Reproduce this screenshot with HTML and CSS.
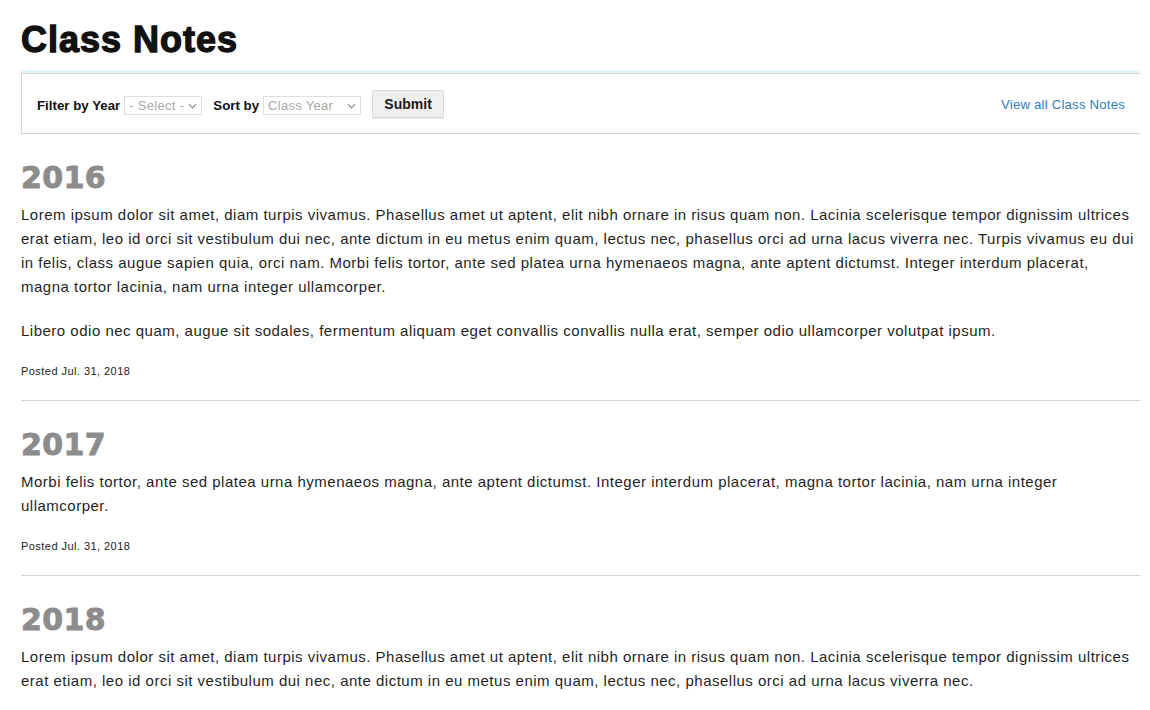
FILE: index.html
```html
<!DOCTYPE html>
<html lang="en">
<head>
<meta charset="utf-8">
<title>Class Notes</title>
<link rel="stylesheet" href="styles.css">
</head>
<body>
<main class="page">
  <h1 class="page-title">Class Notes</h1>

  <form class="filter-bar">
    <div class="filter-controls">
      <label class="filter-label" for="year">Filter by Year</label>
      <span class="select-wrap select-year">
        <select id="year" class="fake-select"><option>- Select -</option></select>
        <svg class="chevron" viewBox="0 0 10 6" width="9" height="6"><path d="M1 1 L5 5 L9 1" fill="none" stroke="#999" stroke-width="1.4"/></svg>
      </span>
      <label class="filter-label sort-label" for="sort">Sort by</label>
      <span class="select-wrap select-sort">
        <select id="sort" class="fake-select"><option>Class Year</option></select>
        <svg class="chevron" viewBox="0 0 10 6" width="9" height="6"><path d="M1 1 L5 5 L9 1" fill="none" stroke="#999" stroke-width="1.4"/></svg>
      </span>
      <button type="button" class="submit-btn">Submit</button>
    </div>
    <a class="view-all" href="#">View all Class Notes</a>
  </form>

  <article class="entry">
    <h2 class="entry-year">2016</h2>
    <p class="entry-text">Lorem ipsum dolor sit amet, diam turpis vivamus. Phasellus amet ut aptent, elit nibh ornare in risus quam non. Lacinia scelerisque tempor dignissim ultrices erat etiam, leo id orci sit vestibulum dui nec, ante dictum in eu metus enim quam, lectus nec, phasellus orci ad urna lacus viverra nec. Turpis vivamus eu dui in felis, class augue sapien quia, orci nam. Morbi felis tortor, ante sed platea urna hymenaeos magna, ante aptent dictumst. Integer interdum placerat, magna tortor lacinia, nam urna integer ullamcorper.</p>
    <p class="entry-text">Libero odio nec quam, augue sit sodales, fermentum aliquam eget convallis convallis nulla erat, semper odio ullamcorper volutpat ipsum.</p>
    <p class="entry-date">Posted Jul. 31, 2018</p>
  </article>

  <article class="entry">
    <h2 class="entry-year">2017</h2>
    <p class="entry-text">Morbi felis tortor, ante sed platea urna hymenaeos magna, ante aptent dictumst. Integer interdum placerat, magna tortor lacinia, nam urna integer ullamcorper.</p>
    <p class="entry-date">Posted Jul. 31, 2018</p>
  </article>

  <article class="entry entry-last">
    <h2 class="entry-year">2018</h2>
    <p class="entry-text">Lorem ipsum dolor sit amet, diam turpis vivamus. Phasellus amet ut aptent, elit nibh ornare in risus quam non. Lacinia scelerisque tempor dignissim ultrices erat etiam, leo id orci sit vestibulum dui nec, ante dictum in eu metus enim quam, lectus nec, phasellus orci ad urna lacus viverra nec.</p>
  </article>
</main>
</body>
</html>
```

FILE: styles.css
```css
html, body {
  margin: 0;
  padding: 0;
  background: #fff;
}

body {
  font-family: "Liberation Sans", Arial, sans-serif;
  color: #1f1f1f;
}

.page {
  width: 1119px;
  padding: 0 10px 0 21px;
}

.page-title {
  margin: 0;
  padding-top: 20px;
  height: 52px;
  box-sizing: border-box;
  font-size: 36px;
  line-height: 40px;
  font-weight: 700;
  letter-spacing: 1px;
  -webkit-text-stroke: 1.3px #111;
  color: #111;
}

.filter-bar {
  margin: 0;
  margin-top: 21px;
  height: 59px;
  display: flex;
  align-items: center;
  justify-content: space-between;
  border-top: 1px solid #d4d4d4;
  border-left: 1px solid #d4d4d4;
  border-bottom: 1px solid #d4d4d4;
  box-shadow: 0 -3px 0 #e3f4fa;
  padding: 0 15px 0 15px;
}

.filter-controls {
  display: flex;
  align-items: center;
  padding-top: 4px;
}

.filter-label {
  font-size: 13.3px;
  font-weight: 700;
  color: #111;
  margin-right: 4px;
}

.sort-label {
  margin-left: 11px;
}

.select-wrap {
  position: relative;
  display: inline-block;
  height: 19px;
}

.select-year { width: 78px; }
.select-sort { width: 98px; }

.fake-select {
  -webkit-appearance: none;
  appearance: none;
  width: 100%;
  height: 19px;
  box-sizing: border-box;
  border: 1px solid #dedede;
  border-radius: 0;
  background: #fff;
  color: #a9a9a9;
  font-family: "Liberation Sans", Arial, sans-serif;
  font-size: 13px;
  letter-spacing: 0.3px;
  padding: 0 0 0 4px;
  margin: 0;
  line-height: 17px;
}

.chevron {
  position: absolute;
  right: 5px;
  top: 7px;
  pointer-events: none;
}

.submit-btn {
  margin-left: 11px;
  height: 28px;
  width: 72px;
  box-sizing: border-box;
  border: 1px solid #d9d9d9;
  border-radius: 2px;
  background: #efefef;
  box-shadow: 0 1px 1px rgba(0,0,0,0.08);
  font-family: "Liberation Sans", Arial, sans-serif;
  font-weight: 700;
  font-size: 14px;
  color: #1a1a1a;
  padding: 0;
  margin-top: -3px;
}

.view-all {
  font-size: 13.2px;
  letter-spacing: 0.2px;
  color: #2f7cb8;
  text-decoration: none;
  padding-top: 1px;
}

.entry {
  padding: 27px 0 21px;
  border-bottom: 1px solid #d2d2d2;
}

.entry-last {
  border-bottom: 0;
  padding-bottom: 0;
}

.entry-year {
  margin: 0;
  font-family: "DejaVu Sans", "Liberation Sans", sans-serif;
  font-size: 30px;
  line-height: 34px;
  font-weight: 700;
  color: #8c8c8c;
  -webkit-text-stroke: 0.9px #8c8c8c;
  letter-spacing: 0.4px;
}

.entry-text {
  margin: 8px 0 0;
  font-size: 15px;
  line-height: 24px;
  letter-spacing: 0.5px;
  color: #1f1f1f;
}

.entry-text + .entry-text {
  margin-top: 20px;
}

.entry-date {
  margin: 20px 0 0;
  font-size: 11px;
  line-height: 16px;
  letter-spacing: 0.45px;
  color: #222;
}
```
